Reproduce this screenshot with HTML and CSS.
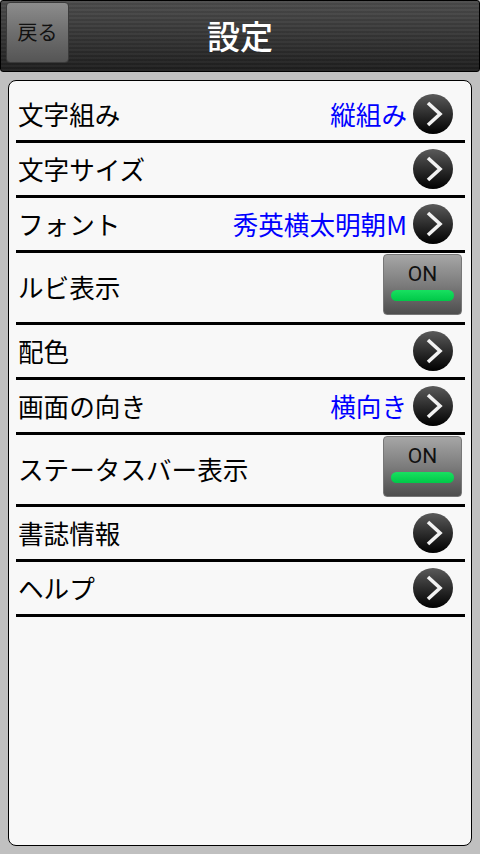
FILE: index.html
```html
<!DOCTYPE html>
<html lang="ja">
<head>
<meta charset="utf-8">
<title>設定</title>
<link rel="stylesheet" href="styles.css">
</head>
<body>
<header class="topbar">
  <button class="back">戻る</button>
  <h1 class="title">設定</h1>
</header>
<main class="card">
  <ul class="list">
    <li class="row"><span class="label">文字組み</span><span class="value">縦組み</span><span class="arrow"><svg viewBox="0 0 40 40" width="40" height="40"><defs><linearGradient id="g1" x1="0" y1="0" x2="0" y2="1"><stop offset="0" stop-color="#5a5a5a"/><stop offset="1" stop-color="#000"/></linearGradient></defs><circle cx="20" cy="20" r="20" fill="url(#g1)"/><polyline points="15,9 27,20 15,31" fill="none" stroke="#f2f2f2" stroke-width="3.6"/></svg></span></li>
    <li class="row"><span class="label">文字サイズ</span><span class="arrow"><svg viewBox="0 0 40 40" width="40" height="40"><circle cx="20" cy="20" r="20" fill="url(#g1)"/><polyline points="15,9 27,20 15,31" fill="none" stroke="#f2f2f2" stroke-width="3.6"/></svg></span></li>
    <li class="row"><span class="label">フォント</span><span class="value">秀英横太明朝M</span><span class="arrow"><svg viewBox="0 0 40 40" width="40" height="40"><circle cx="20" cy="20" r="20" fill="url(#g1)"/><polyline points="15,9 27,20 15,31" fill="none" stroke="#f2f2f2" stroke-width="3.6"/></svg></span></li>
    <li class="row tall"><span class="label">ルビ表示</span><span class="toggle"><span class="on">ON</span><span class="bar"></span></span></li>
    <li class="row"><span class="label">配色</span><span class="arrow"><svg viewBox="0 0 40 40" width="40" height="40"><circle cx="20" cy="20" r="20" fill="url(#g1)"/><polyline points="15,9 27,20 15,31" fill="none" stroke="#f2f2f2" stroke-width="3.6"/></svg></span></li>
    <li class="row"><span class="label">画面の向き</span><span class="value">横向き</span><span class="arrow"><svg viewBox="0 0 40 40" width="40" height="40"><circle cx="20" cy="20" r="20" fill="url(#g1)"/><polyline points="15,9 27,20 15,31" fill="none" stroke="#f2f2f2" stroke-width="3.6"/></svg></span></li>
    <li class="row tall"><span class="label">ステータスバー表示</span><span class="toggle"><span class="on">ON</span><span class="bar"></span></span></li>
    <li class="row"><span class="label">書誌情報</span><span class="arrow"><svg viewBox="0 0 40 40" width="40" height="40"><circle cx="20" cy="20" r="20" fill="url(#g1)"/><polyline points="15,9 27,20 15,31" fill="none" stroke="#f2f2f2" stroke-width="3.6"/></svg></span></li>
    <li class="row"><span class="label">ヘルプ</span><span class="arrow"><svg viewBox="0 0 40 40" width="40" height="40"><circle cx="20" cy="20" r="20" fill="url(#g1)"/><polyline points="15,9 27,20 15,31" fill="none" stroke="#f2f2f2" stroke-width="3.6"/></svg></span></li>
  </ul>
</main>
</body>
</html>
```
FILE: styles.css
```css
* { box-sizing: border-box; }
html, body { height: 100%; }
body {
  margin: 0;
  background: #c0c0c0;
  font-family: "Noto Sans CJK JP", "Noto Sans", sans-serif;
  display: flex;
  flex-direction: column;
  height: 854px;
  overflow: hidden;
}
.topbar {
  height: 72px;
  flex: none;
  border: 1px solid #000;
  border-radius: 3px;
  background:
    repeating-linear-gradient(to bottom, rgba(255,255,255,0.03) 0 2px, rgba(0,0,0,0.05) 2px 4px),
    linear-gradient(to bottom, #4c4c4c 0%, #363636 50%, #1e1e1e 100%);
  display: flex;
  align-items: flex-start;
  padding: 1px 0 0 5px;
}
.back {
  width: 63px;
  height: 61px;
  border: 1px solid #3a3a3a;
  border-radius: 4px;
  background: linear-gradient(to bottom, #8c8c8c 0%, #6e6e6e 50%, #555 100%);
  font-family: "Noto Sans CJK JP", sans-serif;
  font-size: 20px;
  color: #111;
  padding: 0 0 2px 0;
  flex: none;
}
.title {
  margin: 0;
  flex: 1;
  text-align: center;
  color: #fff;
  font-size: 33px;
  font-weight: 500;
  line-height: 66px;
  padding-right: 68px;
}
.card {
  flex: 1;
  margin: 8px 8px 8px 8px;
  background: #f8f8f8;
  border: 1px solid #000;
  border-radius: 8px;
}
.list {
  list-style: none;
  margin: 0;
  padding: 7px 6px 0 7px;
}
.row {
  height: 55px;
  border-bottom: 3px solid #000;
  display: flex;
  align-items: center;
}
.row.tall { height: 72px; }
.label {
  flex: 1;
  padding: 0 0 2px 2px;
  font-size: 25.6px;
  color: #000;
}
.value {
  font-size: 25.6px;
  color: #0000ff;
  margin-right: 6px;
  padding-bottom: 2px;
}
.arrow {
  width: 40px;
  height: 40px;
  margin-right: 12px;
  display: block;
}
.arrow svg { display: block; }
.toggle {
  align-self: flex-start;
  margin-top: 1px;
  margin-right: 3px;
  width: 79px;
  height: 61px;
  border: 1px solid #777;
  border-radius: 4px;
  background: linear-gradient(to bottom, #a6a6a6 0%, #7c7c7c 50%, #4e4e4e 100%);
  display: flex;
  flex-direction: column;
  align-items: center;
}
.on {
  font-family: Roboto, "Noto Sans", sans-serif;
  font-size: 21px;
  color: #111;
  line-height: 24px;
  margin-top: 7px;
}
.bar {
  margin-top: 4px;
  width: 63px;
  height: 11px;
  border-radius: 6px;
  background: linear-gradient(to bottom, #18e060 0%, #00c848 100%);
}
```
